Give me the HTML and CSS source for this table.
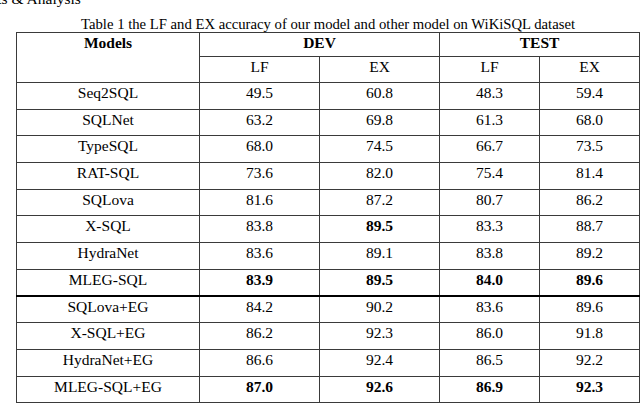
FILE: index.html
```html
<!DOCTYPE html>
<html lang="en">
<head>
  <meta charset="UTF-8" />
  <meta name="viewport" content="width=device-width, initial-scale=1.0" />
  <title>Results &amp; Analysis</title>
  <link rel="stylesheet" href="styles.css">
</head>
<body>
  <h2 class="section">Results &amp; Analysis</h2>
  <table class="results">
    <caption>Table 1 the LF and EX accuracy of our model and other model on WiKiSQL dataset</caption>
    <colgroup>
      <col class="col-model">
      <col class="col-dev">
      <col class="col-dev">
      <col class="col-test">
      <col class="col-test">
    </colgroup>
    <thead>
      <tr class="head-top">
        <th rowspan="2">Models</th>
        <th colspan="2">DEV</th>
        <th colspan="2">TEST</th>
      </tr>
      <tr class="head-sub">
        <td>LF</td>
        <td>EX</td>
        <td>LF</td>
        <td>EX</td>
      </tr>
    </thead>
    <tbody>
      <tr><td>Seq2SQL</td><td>49.5</td><td>60.8</td><td>48.3</td><td>59.4</td></tr>
      <tr><td>SQLNet</td><td>63.2</td><td>69.8</td><td>61.3</td><td>68.0</td></tr>
      <tr><td>TypeSQL</td><td>68.0</td><td>74.5</td><td>66.7</td><td>73.5</td></tr>
      <tr><td>RAT-SQL</td><td>73.6</td><td>82.0</td><td>75.4</td><td>81.4</td></tr>
      <tr><td>SQLova</td><td>81.6</td><td>87.2</td><td>80.7</td><td>86.2</td></tr>
      <tr><td>X-SQL</td><td>83.8</td><td><b>89.5</b></td><td>83.3</td><td>88.7</td></tr>
      <tr><td>HydraNet</td><td>83.6</td><td>89.1</td><td>83.8</td><td>89.2</td></tr>
      <tr><td>MLEG-SQL</td><td><b>83.9</b></td><td><b>89.5</b></td><td><b>84.0</b></td><td><b>89.6</b></td></tr>
      <tr class="group-start"><td>SQLova+EG</td><td>84.2</td><td>90.2</td><td>83.6</td><td>89.6</td></tr>
      <tr><td>X-SQL+EG</td><td>86.2</td><td>92.3</td><td>86.0</td><td>91.8</td></tr>
      <tr><td>HydraNet+EG</td><td>86.6</td><td>92.4</td><td>86.5</td><td>92.2</td></tr>
      <tr><td>MLEG-SQL+EG</td><td><b>87.0</b></td><td><b>92.6</b></td><td><b>86.9</b></td><td><b>92.3</b></td></tr>
    </tbody>
  </table>
</body>
</html>
```

FILE: styles.css
```css
body {
  font-family: "Liberation Serif", "Times New Roman", serif;
  font-size: 15.5px;
  color: #000;
  background: #fff;
  margin: 0;
  overflow: hidden;
}

.section {
  font-size: 15.5px;
  font-weight: normal;
  line-height: 18px;
  margin: -10px 0 0 -38px;
  white-space: nowrap;
}

.results {
  border-collapse: collapse;
  table-layout: fixed;
  width: 623px;
  margin-left: 16px;
}

.results caption {
  font-size: 14.7px;
  line-height: 16px;
  margin-top: 8px;
  text-align: center;
}

.col-model { width: 183px; }
.col-dev { width: 120px; }
.col-test { width: 100px; }

.results th,
.results td {
  border: 1px solid #3a3a3a;
  text-align: center;
  vertical-align: top;
  padding: 1px 4px 0;
  line-height: 18px;
}

.results th {
  font-weight: bold;
}

.head-top {
  height: 23.7px;
}

.head-sub {
  height: 26.3px;
}

.results tbody tr {
  height: 26.7px;
}

.results b {
  font-weight: bold;
}

.group-start td {
  border-top: 2px solid #000;
}
```
